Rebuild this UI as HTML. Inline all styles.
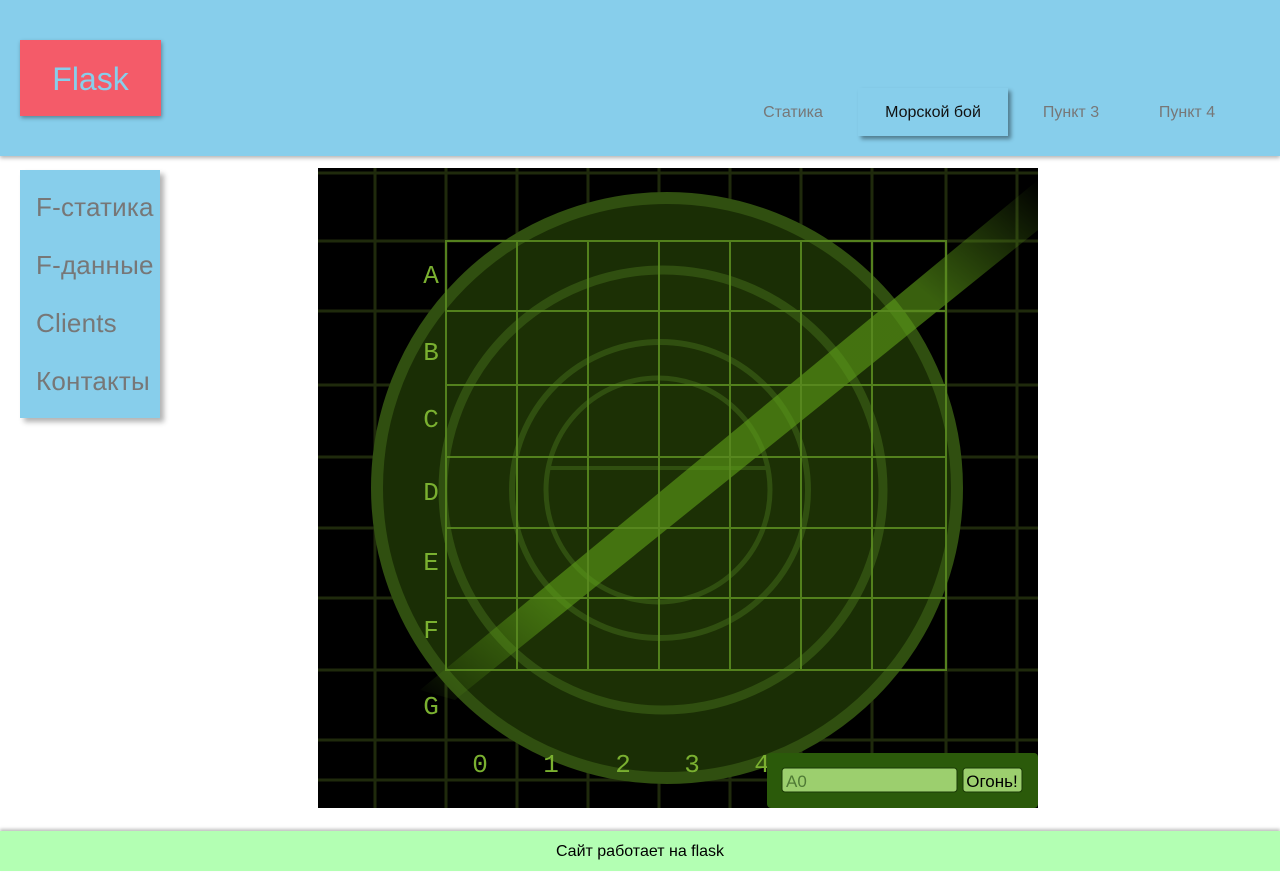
<!DOCTYPE html>
<html><head><meta charset="utf-8"><style>
body{margin:0;width:1280px;height:871px;background:#fff;font-family:"Liberation Sans",sans-serif;position:relative;overflow:hidden}
.hdr{position:absolute;left:0;top:0;width:1280px;height:156px;background:#87ceeb;box-shadow:0 2px 4px rgba(0,0,0,.3)}
.logo{position:absolute;left:20px;top:40px;width:141px;height:76px;background:#f45b69;box-shadow:1px 2px 4px rgba(0,0,0,.35);color:#87ceeb;font-size:32px;text-align:center;line-height:78px}
.nav{position:absolute;top:88px;height:48px;line-height:50px;font-size:16px;color:#777;text-align:center}
.act{background:#87ceeb;color:#111;box-shadow:3px 3px 4px rgba(0,0,0,.4)}
.side{position:absolute;left:20px;top:170px;width:140px;height:248px;background:#87ceeb;box-shadow:4px 4px 5px rgba(0,0,0,.3)}
.side div{position:absolute;left:16px;font-size:26px;color:#777;letter-spacing:0.2px}
.ft{position:absolute;left:0;top:831px;width:1280px;height:40px;background:#b3ffb3;box-shadow:0 -2px 3px rgba(0,0,0,.25);text-align:center;line-height:42px;font-size:16px}
</style></head><body>
<div class="hdr">
<div class="logo">Flask</div>
<div class="nav" style="left:740px;width:106px">Статика</div>
<div class="nav act" style="left:858px;width:150px">Морской бой</div>
<div class="nav" style="left:1018px;width:106px">Пункт 3</div>
<div class="nav" style="left:1134px;width:106px">Пункт 4</div>
</div>
<div class="side">
<div style="top:22px">F-статика</div>
<div style="top:80px">F-данные</div>
<div style="top:138px">Clients</div>
<div style="top:196px">Контакты</div>
</div>
<svg style="position:absolute;left:318px;top:168px" width="720" height="640" viewBox="318 168 720 640">
<defs><linearGradient id="b" x1="0" y1="1" x2="1" y2="0"><stop offset="0" stop-color="#5fa018" stop-opacity="0"/><stop offset=".2" stop-color="#5fa018" stop-opacity=".8"/><stop offset=".8" stop-color="#5fa018" stop-opacity=".8"/><stop offset="1" stop-color="#5fa018" stop-opacity="0"/></linearGradient></defs>
<rect x="318" y="168" width="720" height="640" fill="#000"/>
<g stroke="#1f2a0c" stroke-width="3">
<line x1="375" y1="168" x2="375" y2="808"/><line x1="1017" y1="168" x2="1017" y2="808"/>
<line x1="318" y1="173" x2="1038" y2="173"/><line x1="318" y1="780" x2="1038" y2="780"/>
<line x1="446" y1="168" x2="446" y2="808"/><line x1="517" y1="168" x2="517" y2="808"/><line x1="588" y1="168" x2="588" y2="808"/><line x1="659" y1="168" x2="659" y2="808"/><line x1="730" y1="168" x2="730" y2="808"/><line x1="801" y1="168" x2="801" y2="808"/><line x1="872" y1="168" x2="872" y2="808"/><line x1="946" y1="168" x2="946" y2="808"/>
<line x1="318" y1="241" x2="1038" y2="241"/><line x1="318" y1="311" x2="1038" y2="311"/><line x1="318" y1="385" x2="1038" y2="385"/><line x1="318" y1="457" x2="1038" y2="457"/><line x1="318" y1="528" x2="1038" y2="528"/><line x1="318" y1="598" x2="1038" y2="598"/><line x1="318" y1="670" x2="1038" y2="670"/><line x1="318" y1="740" x2="1038" y2="740"/>
</g>
<circle cx="667" cy="488" r="290" fill="#1a2e05" stroke="#304f10" stroke-width="12"/>
<circle cx="663" cy="490" r="220" fill="#1c3005" stroke="#304f10" stroke-width="9"/>
<circle cx="660" cy="490" r="148" fill="none" stroke="#304f10" stroke-width="6"/>
<circle cx="658" cy="490" r="112" fill="none" stroke="#304f10" stroke-width="5"/>
<line x1="548" y1="468" x2="768" y2="468" stroke="#304f10" stroke-width="4"/>
<polygon points="420,690 455,700 1038,230 1038,180" fill="url(#b)" opacity=".75"/>
<g stroke="#5a8a20" stroke-width="2" fill="none" opacity=".9">
<rect x="446" y="241" width="500" height="429"/>
<line x1="517" y1="241" x2="517" y2="670"/><line x1="588" y1="241" x2="588" y2="670"/><line x1="659" y1="241" x2="659" y2="670"/><line x1="730" y1="241" x2="730" y2="670"/><line x1="801" y1="241" x2="801" y2="670"/><line x1="872" y1="241" x2="872" y2="670"/>
<line x1="446" y1="311" x2="946" y2="311"/><line x1="446" y1="385" x2="946" y2="385"/><line x1="446" y1="457" x2="946" y2="457"/><line x1="446" y1="528" x2="946" y2="528"/><line x1="446" y1="598" x2="946" y2="598"/>
</g>
<g fill="#7ab030" font-family="Liberation Mono,monospace" font-size="26" text-anchor="middle">
<text x="431" y="283">A</text><text x="431" y="360">B</text><text x="431" y="427">C</text><text x="431" y="500">D</text><text x="431" y="570">E</text><text x="431" y="638">F</text><text x="431" y="714">G</text>
<text x="480" y="772">0</text><text x="551" y="772">1</text><text x="623" y="772">2</text><text x="692" y="772">3</text><text x="762" y="772">4</text>
</g>
<rect x="767" y="753" width="271" height="55" rx="4" fill="#2b5a0a"/>
<rect x="782" y="768" width="175" height="24" rx="3" fill="#9ccf6e" stroke="#1a3a05"/>
<text x="786" y="787" font-size="17" fill="#4f7a35" font-family="Liberation Sans,sans-serif">A0</text>
<rect x="963" y="768" width="59" height="24" rx="3" fill="#9ccf6e" stroke="#1a3a05"/>
<text x="992" y="787" font-size="17" fill="#000" text-anchor="middle" font-family="Liberation Sans,sans-serif">Огонь!</text>
</svg>
<div class="ft">Сайт работает на flask</div>
</body></html>
